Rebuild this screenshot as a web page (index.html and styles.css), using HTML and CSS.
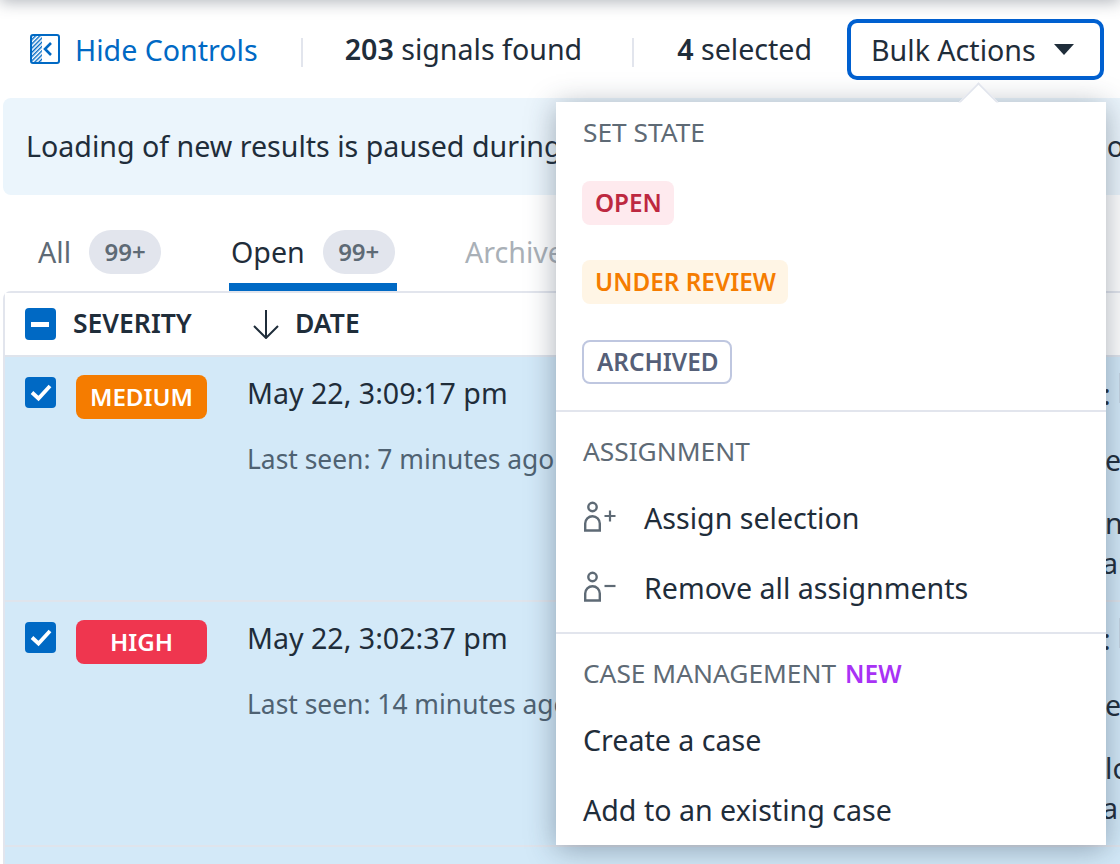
FILE: index.html
```html
<!DOCTYPE html>
<html lang="en">
<head>
<meta charset="utf-8">
<title>Signals</title>
<link rel="stylesheet" href="styles.css">
</head>
<body>
<div class="page">
  <header class="toolbar">
    <a class="hide">
      <svg class="hide-icon" width="32" height="32" viewBox="0 0 32 32" fill="none">
        <defs><pattern id="hatch" width="3" height="3" patternUnits="userSpaceOnUse" patternTransform="rotate(45)"><rect width="1.4" height="3" fill="#0069c4"/></pattern></defs>
        <rect x="3" y="3" width="10" height="26" fill="url(#hatch)"/>
        <rect x="2" y="2" width="28" height="28" rx="2" stroke="#0069c4" stroke-width="2"/>
        <path d="M22 10l-6 6 6 6" stroke="#0069c4" stroke-width="2.6"/>
      </svg>
      <span>Hide Controls</span>
    </a>
    <span class="sep sep-a"></span>
    <span class="count"><b>203</b> signals found</span>
    <span class="sep sep-b"></span>
    <span class="count"><b>4</b> selected</span>
    <button class="bulk"><span>Bulk Actions</span><i class="caret"></i></button>
  </header>
  <div class="banner"><span>Loading of new results is paused during bulk selection</span><span class="banner-end">o</span></div>
  <nav class="tabs">
    <div class="tab tab-all"><span>All</span><em class="pill">99+</em></div>
    <div class="tab tab-open"><span>Open</span><em class="pill">99+</em></div>
    <div class="tab tab-arch"><span>Archived</span></div>
  </nav>
  <section class="table">
    <div class="thead">
      <span class="check"><svg width="31" height="32" viewBox="0 0 31 32"><path d="M6 16.5h18" stroke="#fff" stroke-width="5"/></svg></span>
      <b class="th-sev">SEVERITY</b>
      <svg class="arrow" width="26" height="30" viewBox="0 0 26 30" fill="none"><path d="M13 1v27M1 17l12 12 12-12" stroke="#1f2d3a" stroke-width="2"/></svg>
      <b>DATE</b>
    </div>
    <article class="row">
      <span class="check"><svg width="31" height="31" viewBox="0 0 31 31" fill="none"><path d="M7 15.5l6.5 6L25 9" stroke="#fff" stroke-width="3.8"/></svg></span>
      <span class="sev sev-med">MEDIUM</span>
      <div class="when"><div class="date">May 22, 3:09:17 pm</div><div class="seen">Last seen: 7 minutes ago</div></div>
      <div class="rest">
        <p class="r1">:</p><i class="rest-tag"></i><p class="r2">e</p><p class="r3">n</p><p class="r4">ar</p>
      </div>
    </article>
    <article class="row">
      <span class="check"><svg width="31" height="31" viewBox="0 0 31 31" fill="none"><path d="M7 15.5l6.5 6L25 9" stroke="#fff" stroke-width="3.8"/></svg></span>
      <span class="sev sev-high">HIGH</span>
      <div class="when"><div class="date">May 22, 3:02:37 pm</div><div class="seen">Last seen: 14 minutes ago</div></div>
      <div class="rest">
        <p class="r1">:</p><i class="rest-tag"></i><p class="r2">e</p><p class="r3">lo</p><p class="r4">ar</p>
      </div>
    </article>
    <article class="row"></article>
  </section>

  <aside class="menu">
    <div class="group group-state">
      <h4>SET STATE</h4>
      <div class="state-item"><span class="state st-open">OPEN</span></div>
      <div class="state-item"><span class="state st-review">UNDER REVIEW</span></div>
      <div class="state-item"><span class="state st-arch">ARCHIVED</span></div>
    </div>
    <div class="group">
      <h4>ASSIGNMENT</h4>
      <div class="item">
        <svg class="uicon" width="36" height="32" viewBox="0 0 36 32" fill="none" stroke="#5e6a75" stroke-width="2.4"><circle cx="9.5" cy="6" r="4.2"/><path d="M2.2 29.5v-7a7.3 7.3 0 0 1 14.6 0v7z"/><path d="M21.5 15h11M27 9.5v11" stroke-width="2.2"/></svg>
        <span>Assign selection</span>
      </div>
      <div class="item">
        <svg class="uicon" width="36" height="32" viewBox="0 0 36 32" fill="none" stroke="#5e6a75" stroke-width="2.4"><circle cx="9.5" cy="6" r="4.2"/><path d="M2.2 29.5v-7a7.3 7.3 0 0 1 14.6 0v7z"/><path d="M21.5 15h11" stroke-width="2.2"/></svg>
        <span>Remove all assignments</span>
      </div>
    </div>
    <div class="group group-last">
      <h4>CASE MANAGEMENT<b class="new">NEW</b></h4>
      <div class="item"><span>Create a case</span></div>
      <div class="item"><span>Add to an existing case</span></div>
    </div>
  </aside>
  <i class="menu-tip"></i>
</div>
</body>
</html>
```

FILE: styles.css
```css
* { box-sizing: border-box; }
html, body { margin: 0; padding: 0; }
body {
  width: 1120px;
  height: 864px;
  overflow: hidden;
  background: #fff;
  font-family: "Noto Sans", sans-serif;
  color: #1f2d3a;
}
.page {
  position: relative;
  width: 1120px;
  height: 864px;
  overflow: hidden;
  padding-left: 3px;
  font-size: 28.6px;
}
.page::before {
  content: "";
  position: absolute;
  left: 0; right: 0; top: -20px;
  height: 20px;
  box-shadow: 0 2px 16px rgba(60, 70, 85, .4);
}
.toolbar {
  display: flex;
  align-items: center;
  height: 98px;
  padding: 0 16px 0 26px;
}
.hide { display: flex; align-items: center; color: #0069c4; }
.hide-icon { margin-right: 14px; margin-top: -1px; }
.sep { width: 2px; height: 29px; margin-top: 7px; background: #e2e5ed; }
.sep-a { margin-left: 43px; margin-right: 42px; }
.sep-b { margin-left: 50px; margin-right: 43px; }
.count { margin-top: -2px; }
.count b { font-weight: 600; }
.bulk {
  display: flex;
  align-items: center;
  justify-content: space-between;
  width: 257px;
  height: 61px;
  margin: 1px 0 0 auto;
  padding: 0 26px 1px 20px;
  background: #fff;
  border: 4px solid #0060d0;
  border-radius: 10px;
  font: inherit;
  color: inherit;
}
.caret {
  border: 10px solid transparent;
  border-top: 11px solid #1f2d3a;
  border-bottom: 0;
  margin-top: 1px;
}
.banner {
  height: 97px;
  display: flex;
  align-items: center;
  justify-content: space-between;
  padding: 0 0 2px 23px;
  background: #ebf5fc;
  border-radius: 8px 0 0 8px;
  white-space: nowrap;
  overflow: hidden;
}
.banner-end { margin-right: -4px; }
.tabs {
  display: flex;
  height: 97px;
  padding-top: 35px;
  color: #5e6a75;
}
.tab { display: flex; align-items: flex-start; height: 61px; }
.tab > span { line-height: 44px; }
.pill {
  display: block;
  width: 72px;
  height: 44px;
  margin-left: 18px;
  border-radius: 22px;
  background: #e2e5ed;
  color: #5e6a75;
  font: 600 24px/44px "Noto Sans", sans-serif;
  text-align: center;
}
.tab-all { margin-left: 35px; width: 191px; }
.tab-open {
  width: 168px;
  padding-left: 2px;
  color: #1f2d3a;
  border-bottom: 8px solid #0069c4;
}
.tab-arch { margin-left: 68px; color: #a9b0b7; }
.table {
  border-top: 2px solid #e2e5ed;
  border-left: 2px solid #e2e5ed;
  border-radius: 8px 0 0 0;
  margin-top: -1px;
}
.thead {
  display: flex;
  align-items: center;
  height: 62px;
  padding: 0 0 2px 20px;
  font-size: 26.5px;
  background: #fff;
}
.thead b { font-weight: 600; }
.thead .check { height: 32px; margin-top: 1px; }
.th-sev { margin-left: 17px; width: 180px; }
.arrow { margin-right: 16px; margin-top: 1px; }
.check {
  flex: none;
  display: block;
  width: 31px;
  height: 31px;
  background: #0069c4;
  border-radius: 4px;
}
.check svg { display: block; }
.row {
  position: relative;
  display: flex;
  align-items: flex-start;
  height: 245px;
  padding: 18px 0 0 20px;
  background: #d3e9f8;
  border-top: 2px solid #dfe4ec;
}
.row .check { margin-top: 2px; }
.sev {
  flex: none;
  width: 131px;
  height: 44px;
  margin-left: 20px;
  border-radius: 8px;
  color: #fff;
  font: 600 24.2px/44px "Noto Sans", sans-serif;
  text-align: center;
}
.sev-med { background: #f57c00; }
.sev-high { background: #ef364f; }
.when { margin: -1px 0 0 40px; }
.date { line-height: 38px; }
.seen { margin-top: 29px; line-height: 36px; font-size: 26.4px; color: #4f6272; white-space: nowrap; }
.rest { position: absolute; left: 1100px; top: 0; white-space: nowrap; }
.rest p { margin: 0; position: absolute; left: 0; line-height: 38px; }
.rest-tag { position: absolute; left: 14px; top: 16px; width: 3px; height: 30px; background: #c4d4e2; }
.rest .r1 { top: 18px; left: -2px; }
.r2 { top: 84px; }
.r3 { top: 147px; }
.rest .r4 { top: 187px; left: -3px; }

.menu {
  position: absolute;
  left: 556px;
  top: 102px;
  width: 550px;
  height: 743px;
  background: #fff;
  box-shadow: 0 4px 28px rgba(40, 55, 75, .4);
}
.menu-tip {
  position: absolute;
  left: 964px;
  top: 88px;
  width: 29px;
  height: 29px;
  background: #fff;
  border: 2px solid #e2e5ed;
  border-right: 0;
  border-bottom: 0;
  transform: rotate(45deg);
  clip-path: polygon(0 0, 100% 0, 0 100%);
}
.menu h4 {
  margin: 0;
  font-size: 26.3px;
  font-weight: 400;
  line-height: 34px;
  color: #5e6a75;
}
.group {
  padding: 22px 26px 0 27px;
  border-top: 2px solid #e2e5ed;
  height: 222px;
}
.group-state { height: 308px; padding-top: 13px; border-top: 0; }
.group-last { height: 213px; }
.new { color: #a832f5; font-weight: 600; font-size: 24.5px; margin-left: 9px; }
.state-item { height: 79.5px; display: flex; align-items: flex-start; margin-left: -1px; }
.group-state h4 { margin-bottom: 31.6px; }
.state {
  display: block;
  height: 44px;
  padding: 0 12px 0 13px;
  border-radius: 8px;
  font: 600 24.3px/44px "Noto Sans", sans-serif;
}
.st-open { background: #feeaee; color: #bd2840; }
.st-review { background: #fff5e5; color: #f57c00; }
.st-arch { border: 2px solid #bfc7e0; color: #555f78; line-height: 40px; }
.item {
  display: flex;
  align-items: center;
  height: 70px;
  white-space: nowrap;
}
.group h4 + .item { margin-top: 14px; }
.group-last h4 + .item { margin-top: 13px; }
.uicon { margin-right: 25px; flex: none; }
```
